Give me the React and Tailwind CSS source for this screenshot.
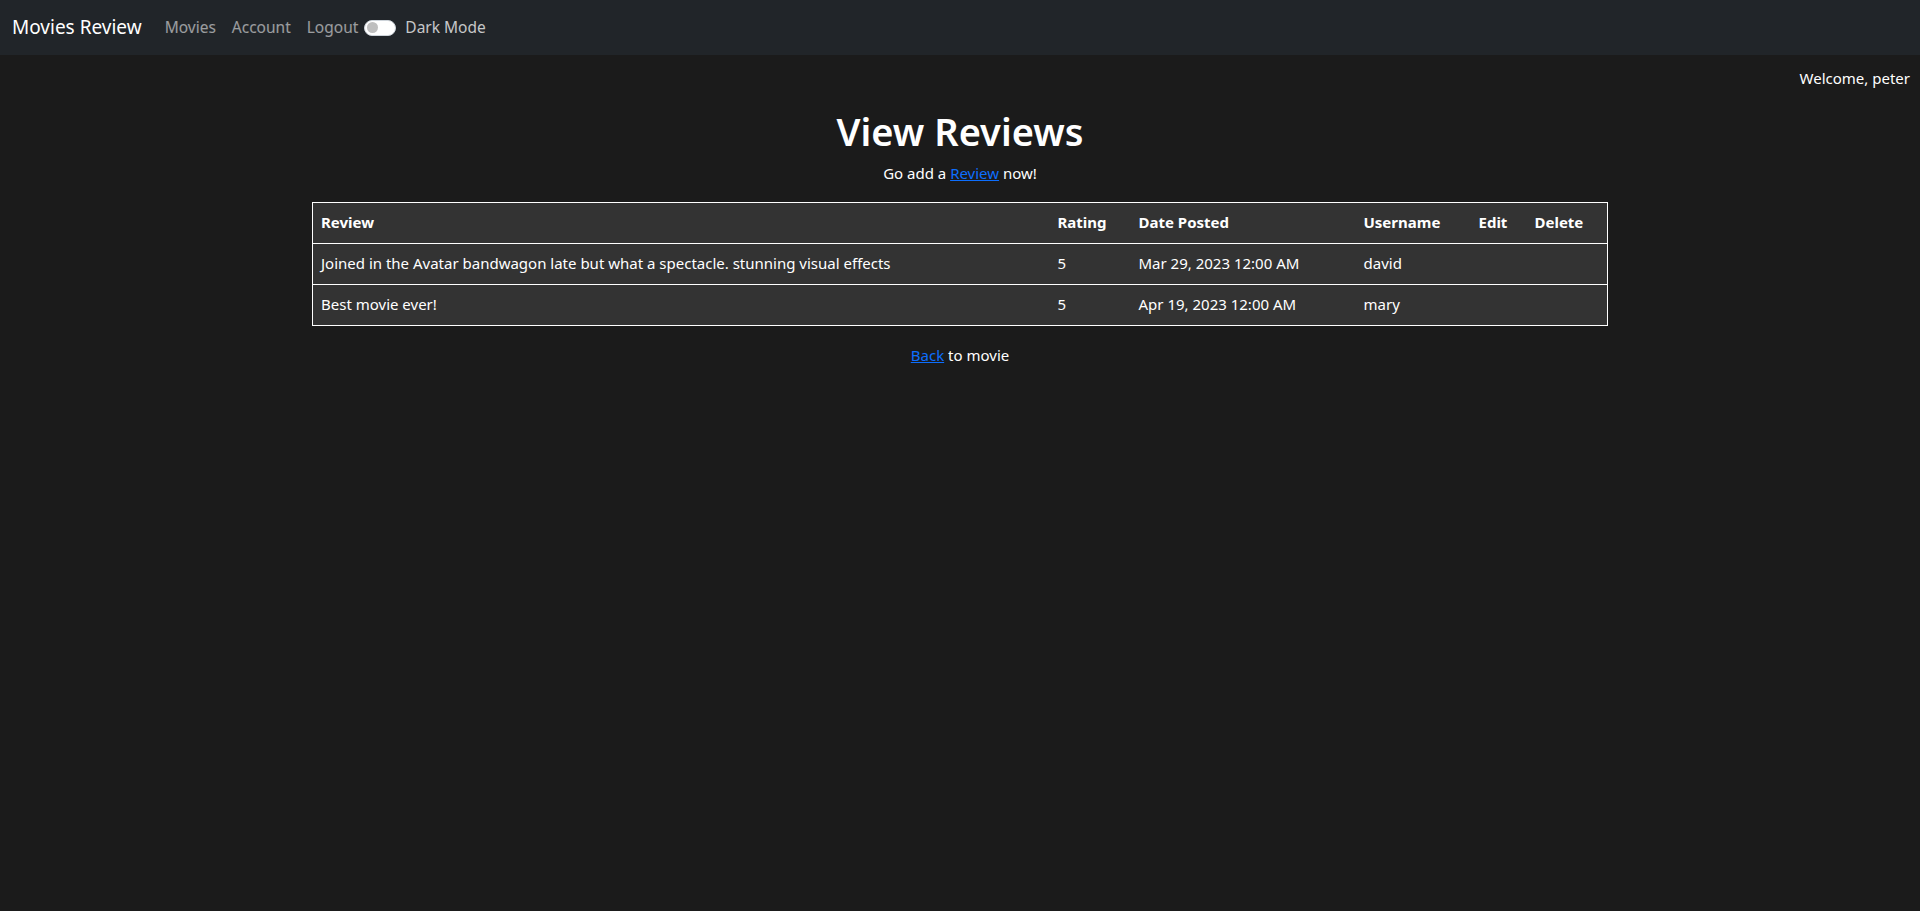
export default function App() {
  const reviews = [
    { id: 1, text: 'Joined in the Avatar bandwagon late but what a spectacle. stunning visual effects', rating: 5, date: 'Mar 29, 2023 12:00 AM', user: 'david' },
    { id: 2, text: 'Best movie ever!', rating: 5, date: 'Apr 19, 2023 12:00 AM', user: 'mary' },
  ];

  return (
    <div className="min-h-[911px] bg-[#1b1b1b] text-white font-['Noto_Sans',sans-serif]">
      {/* Navbar */}
      <nav className="h-[55px] bg-[#212529] flex items-center px-3">
        <span className="text-[19px] text-white mr-[15px]">Movies Review</span>
        <div className="flex items-center text-[15.5px] text-white/55">
          <a className="px-2">Movies</a>
          <a className="px-2">Account</a>
          <a className="pl-2 pr-[6px]">Logout</a>
          <div className="flex items-center">
            <span className="w-[32px] h-[16px] rounded-full bg-white border border-[#ced4da] flex items-center px-[2px]">
              <span className="w-[11px] h-[11px] rounded-full bg-[#bfbfbf]" />
            </span>
            <span className="ml-[9px] text-white/75">Dark Mode</span>
          </div>
        </div>
      </nav>

      <div className="text-right pr-[10px] pt-[12px] text-[15px]">Welcome, peter</div>

      <div className="max-w-[1320px] mx-auto px-3">
        <h1 className="text-center text-[38px] font-semibold leading-tight mt-[18px]">View Reviews</h1>
        <p className="text-center text-[15px] mt-[7px]">
          Go add a <a className="text-[#0d6efd] underline">Review</a> now!
        </p>

        <table className="w-full mt-[17px] border border-white bg-[#333333] text-[15px] border-collapse">
          <thead>
            <tr className="h-[41px] border-b border-white text-left">
              <th className="w-[737px] px-2 font-bold">Review</th>
              <th className="w-[81px] px-2 font-bold">Rating</th>
              <th className="w-[225px] px-2 font-bold">Date Posted</th>
              <th className="w-[115px] px-2 font-bold">Username</th>
              <th className="w-[56px] px-2 font-bold">Edit</th>
              <th className="px-2 font-bold">Delete</th>
            </tr>
          </thead>
          <tbody>
            {reviews.map(r => (
              <tr key={r.id} className="h-[41px] border-b border-white">
                <td className="px-2">{r.text}</td>
                <td className="px-2">{r.rating}</td>
                <td className="px-2">{r.date}</td>
                <td className="px-2">{r.user}</td>
                <td className="px-2"></td>
                <td className="px-2"></td>
              </tr>
            ))}
          </tbody>
        </table>

        <p className="text-center text-[15px] mt-[18px]">
          <a className="text-[#0d6efd] underline">Back</a> to movie
        </p>
      </div>
    </div>
  );
}
